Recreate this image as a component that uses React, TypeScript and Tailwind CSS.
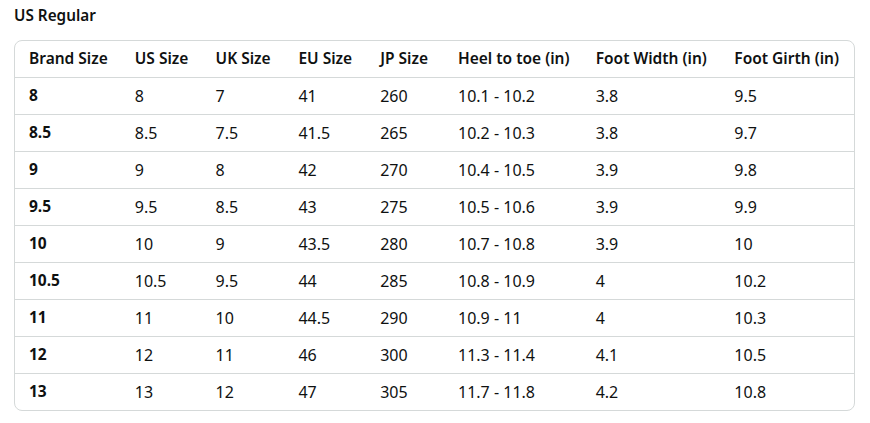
import React from "react";

const headers = ["Brand Size", "US Size", "UK Size", "EU Size", "JP Size", "Heel to toe (in)", "Foot Width (in)", "Foot Girth (in)"];
const widths = ["w-[106px]", "w-[81px]", "w-[83px]", "w-[82px]", "w-[78px]", "w-[138px]", "w-[139px]", "w-[134px]"];
const rows = [
  ["8", "8", "7", "41", "260", "10.1 - 10.2", "3.8", "9.5"],
  ["8.5", "8.5", "7.5", "41.5", "265", "10.2 - 10.3", "3.8", "9.7"],
  ["9", "9", "8", "42", "270", "10.4 - 10.5", "3.9", "9.8"],
  ["9.5", "9.5", "8.5", "43", "275", "10.5 - 10.6", "3.9", "9.9"],
  ["10", "10", "9", "43.5", "280", "10.7 - 10.8", "3.9", "10"],
  ["10.5", "10.5", "9.5", "44", "285", "10.8 - 10.9", "4", "10.2"],
  ["11", "11", "10", "44.5", "290", "10.9 - 11", "4", "10.3"],
  ["12", "12", "11", "46", "300", "11.3 - 11.4", "4.1", "10.5"],
  ["13", "13", "12", "47", "305", "11.7 - 11.8", "4.2", "10.8"],
];

export default function App() {
  return (
    <div className="bg-white w-[870px] h-[423px] px-[14px] pt-[4px] text-[#0f1111]" style={{ fontFamily: '"Noto Sans", "Open Sans", sans-serif' }}>
      <div className="text-[15.3px] font-semibold h-[36px] leading-[22px]">US Regular</div>
      <div className="w-[841px] border border-[#d5d9d9] rounded-[8px] overflow-hidden">
        <div className="flex h-[36px] items-center">
          {headers.map((h, i) => (
            <div key={i} className={`${widths[i]} pl-[14px] text-[15.5px] font-semibold whitespace-nowrap`}>{h}</div>
          ))}
        </div>
        {rows.map((r, ri) => (
          <div key={ri} className="flex h-[37px] items-center border-t border-[#d5d9d9]">
            {r.map((c, i) => (
              <div key={i} className={`${widths[i]} pl-[14px] whitespace-nowrap ${i === 0 ? "font-bold text-[15.5px]" : "font-normal text-[16px]"}`}>{c}</div>
            ))}
          </div>
        ))}
      </div>
    </div>
  );
}
